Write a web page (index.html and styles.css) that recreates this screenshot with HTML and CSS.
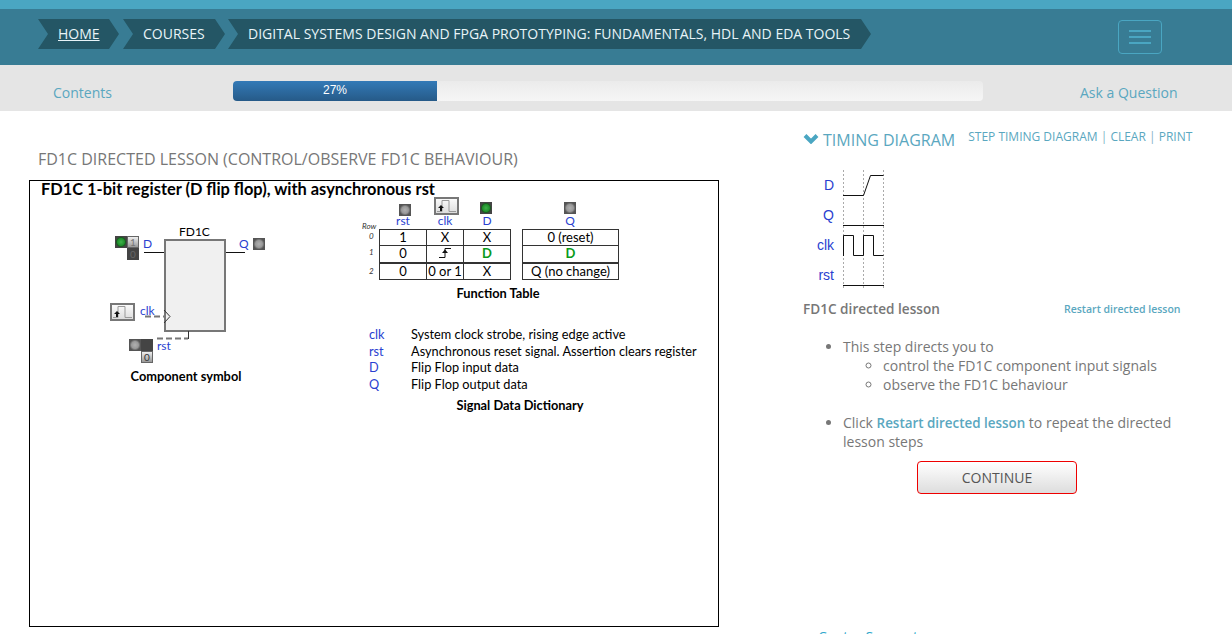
FILE: index.html
```html
<!DOCTYPE html>
<html lang="en">
<head>
    <meta charset="UTF-8">
    <meta name="viewport" content="width=device-width, initial-scale=1.0">
    <title>FD1C directed lesson</title>
    <link rel="stylesheet" href="styles.css">
</head>
<body>
    <header class="topbar">
        <nav class="crumbs">
            <a class="crumb crumb-home" href="#"><span>HOME</span></a>
            <a class="crumb crumb-courses" href="#">COURSES</a>
            <a class="crumb crumb-title" href="#">DIGITAL SYSTEMS DESIGN AND FPGA PROTOTYPING: FUNDAMENTALS, HDL AND EDA TOOLS</a>
        </nav>
        <button class="menu-btn"><i></i><i></i><i></i></button>
    </header>

    <div class="subbar">
        <a class="sub-link contents-link" href="#">Contents</a>
        <div class="progress"><div class="progress-fill">27%</div></div>
        <a class="sub-link ask-link" href="#">Ask a Question</a>
    </div>

    <main class="main">
        <section class="lesson">
            <h2 class="lesson-title">FD1C DIRECTED LESSON (CONTROL/OBSERVE FD1C BEHAVIOUR)</h2>
            <div class="canvas">
                <h3 class="canvas-title">FD1C 1-bit register (D flip flop), with asynchronous rst</h3>

                <!-- viewBox uses page coordinates so wires are easy to compare -->
                <svg class="wires" viewBox="30 181 688 445">
                    <rect x="165" y="240" width="60" height="91" fill="#f0f0f0" stroke="#777" stroke-width="2"/>
                    <path d="M144 252.500h20M226 252.500h19" stroke="#111" fill="none"/>
                    <path d="M145 316.500h19" stroke="#777" stroke-width="2" stroke-dasharray="6 3" fill="none"/>
                    <path d="M164 310l6 6.500-6 6.500" stroke="#333" fill="none"/>
                    <path d="M157 338.500h31" stroke="#777" stroke-width="2" stroke-dasharray="6 3" fill="none"/>
                    <path d="M188.500 331v8" stroke="#333" fill="none"/>
                </svg>

                <!-- component symbol -->
                <span class="lbl sym-name">FD1C</span>
                <span class="led led-on d-led"></span>
                <span class="bit bit-on d-one">1</span>
                <span class="bit bit-off d-zero">0</span>
                <span class="lbl sig d-lbl">D</span>
                <span class="lbl sig q-lbl">Q</span>
                <span class="led q-led"></span>
                <span class="clk-btn clk-sym">
                    <svg width="21" height="14" viewBox="0 0 21 14"><path d="M1 12.500h5v-11h7v11h7" fill="none" stroke="#999"/><path d="M2 9l3-3 3 3zM4 9h2v3h-2z" fill="#111"/></svg>
                </span>
                <span class="lbl sig clk-lbl">clk</span>
                <span class="led rst-led"></span>
                <span class="bit bit-off rst-one"></span>
                <span class="bit bit-on rst-zero">0</span>
                <span class="lbl sig rst-lbl">rst</span>
                <strong class="lbl caption cap-symbol">Component symbol</strong>

                <!-- function table -->
                <span class="led fn-rst-led"></span>
                <span class="clk-btn fn-clk-btn">
                    <svg width="21" height="14" viewBox="0 0 21 14"><path d="M1 12.500h5v-11h7v11h7" fill="none" stroke="#999"/><path d="M2 9l3-3 3 3zM4 9h2v3h-2z" fill="#111"/></svg>
                </span>
                <span class="led led-on fn-d-led"></span>
                <span class="led fn-q-led"></span>
                <span class="lbl sig head head-rst">rst</span>
                <span class="lbl sig head head-clk">clk</span>
                <span class="lbl sig head head-d">D</span>
                <span class="lbl sig head head-q">Q</span>
                <em class="row-no row-head">Row</em>
                <em class="row-no row-0">0</em>
                <em class="row-no row-1">1</em>
                <em class="row-no row-2">2</em>
                <div class="fn-grid fn-inputs">
                    <div>1</div><div>X</div><div>X</div>
                    <div>0</div>
                    <div><svg width="14" height="12" viewBox="0 0 14 12"><path d="M1 10.500h6v-9h6" fill="none" stroke="#111"/><path d="M4 6l3-3.500 3 3.500z" fill="#111"/></svg></div>
                    <div class="fn-d">D</div>
                    <div class="fn-last">0</div><div class="fn-last">0 or 1</div><div class="fn-last">X</div>
                </div>
                <div class="fn-grid fn-outputs">
                    <div>0 (reset)</div>
                    <div class="fn-d">D</div>
                    <div class="fn-last">Q (no change)</div>
                </div>
                <strong class="lbl caption cap-table">Function Table</strong>

                <!-- signal dictionary -->
                <dl class="dict">
                    <dt>clk</dt><dd>System clock strobe, rising edge active</dd>
                    <dt>rst</dt><dd>Asynchronous reset signal. Assertion clears register</dd>
                    <dt>D</dt><dd>Flip Flop input data</dd>
                    <dt>Q</dt><dd>Flip Flop output data</dd>
                </dl>
                <strong class="lbl caption cap-dict">Signal Data Dictionary</strong>
            </div>
        </section>

        <aside class="side">
            <div class="timing-head">
                <svg class="chevron" width="16" height="11" viewBox="0 0 16 11"><path d="M2 2.500l6 6 6-6" fill="none" stroke="#4aa6c2" stroke-width="4"/></svg>
                <h2 class="timing-title">TIMING DIAGRAM</h2>
                <div class="timing-links">
                    <a href="#">STEP TIMING DIAGRAM</a> <span>|</span> <a href="#">CLEAR</a> <span>|</span> <a href="#">PRINT</a>
                </div>
            </div>

            <div class="timing">
                <div class="timing-names">
                    <span>D</span><span>Q</span><span>clk</span><span>rst</span>
                </div>
                <svg class="waves" width="44" height="120" viewBox="842 168 44 120">
                    <path d="M843.500 169v119M863.500 169v119M883.500 169v119" stroke="#aaa" stroke-dasharray="2 2" fill="none"/>
                    <path d="M843 194.500h20.500l7-20h13" stroke="#111" fill="none"/>
                    <path d="M843 224.500h41" stroke="#111" fill="none"/>
                    <path d="M843.500 255v-20.500h10v20h10v-20h10v20h10" stroke="#111" fill="none"/>
                    <path d="M843 284.500h41" stroke="#111" fill="none"/>
                </svg>
            </div>

            <div class="directed-head">
                <h3>FD1C directed lesson</h3>
                <a href="#">Restart directed lesson</a>
            </div>

            <ul class="steps">
                <li>This step directs you to
                    <ul>
                        <li>control the FD1C component input signals</li>
                        <li>observe the FD1C behaviour</li>
                    </ul>
                </li>
                <li>Click <a href="#">Restart directed lesson</a> to repeat the directed lesson steps</li>
            </ul>

            <button class="continue">CONTINUE</button>

            <a class="center-link" href="#">Center Support</a>
        </aside>
    </main>
</body>
</html>
```

FILE: styles.css
```css
* {
    box-sizing: border-box;
}
html, body {
    height: 634px;
    overflow: hidden;
}
body {
    margin: 0;
    font-family: "Open Sans", sans-serif;
    font-size: 14px;
    color: #777;
    background-color: #fff;
}
a {
    color: #5aa7c0;
    text-decoration: none;
}

/* top bar */
.topbar {
    height: 65px;
    padding: 10px 70px 0 38px;
    display: flex;
    justify-content: space-between;
    background-color: #387c94;
    border-top: 9px solid #4aa6c2;
}
.crumbs {
    display: flex;
    height: 30px;
}
.crumb {
    height: 30px;
    line-height: 29px;
    color: #e8f4f8;
    background-color: #245665;
    clip-path: polygon(0 0, calc(100% - 10px) 0, 100% 50%, calc(100% - 10px) 100%, 0 100%, 10px 50%);
}
.crumb-home {
    width: 81px;
    padding-left: 20px;
    margin-right: 4px;
}
.crumb-home span {
    text-decoration: underline;
}
.crumb-courses {
    width: 102px;
    padding-left: 20px;
    margin-right: 3px;
}
.crumb-title {
    width: 643px;
    padding-left: 20px;
    white-space: nowrap;
}
.menu-btn {
    width: 44px;
    height: 34px;
    margin-top: 1px;
    padding: 9px 10px;
    display: flex;
    flex-direction: column;
    gap: 4px;
    align-items: center;
    background: transparent;
    border: 1px solid #4aa6c2;
    border-radius: 4px;
}
.menu-btn i {
    display: block;
    width: 22px;
    height: 2px;
    background-color: #4aa6c2;
}

/* progress row */
.subbar {
    height: 46px;
    display: flex;
    align-items: center;
    background-color: #e5e5e5;
}
.sub-link {
    position: relative;
    top: 5px;
    line-height: 16px;
}
.contents-link {
    margin-left: 53px;
    width: 180px;
}
.progress {
    width: 750px;
    height: 20px;
    margin-top: 5px;
    background: linear-gradient(#ebebeb, #f6f6f6);
    border-radius: 4px;
    overflow: hidden;
}
.progress-fill {
    width: 204px;
    height: 20px;
    font-family: "Liberation Sans", Arial, sans-serif;
    font-size: 12px;
    line-height: 19px;
    text-align: center;
    color: #fff;
    background: linear-gradient(#337ab7, #265a88);
}
.ask-link {
    margin-left: 97px;
}

/* main columns */
.main {
    display: flex;
    height: 523px;
}
.lesson {
    width: 774px;
    padding-left: 29px;
}
.lesson-title {
    margin: 39px 0 11px 9px;
    font-size: 16px;
    font-weight: 400;
    line-height: 19px;
    color: #777;
    white-space: nowrap;
}

/* diagram canvas */
.canvas {
    position: relative;
    width: 690px;
    height: 447px;
    border: 1px solid #000;
    font-family: Lato, sans-serif;
    font-size: 12px;
    color: #000;
}
.canvas-title {
    position: absolute;
    left: 11px;
    top: -1px;
    margin: 0;
    font-size: 16.400px;
    line-height: 18px;
    font-weight: 700;
    white-space: nowrap;
}
.wires {
    position: absolute;
    left: 0;
    top: 0;
    width: 688px;
    height: 445px;
}
.lbl {
    position: absolute;
    line-height: 14px;
    white-space: nowrap;
}
.sig {
    color: #2a3fd0;
}
.caption {
    font-size: 12.800px;
    font-weight: 700;
    transform: translateX(-50%);
}
.sym-name { left: 149px; top: 44px; }
.d-lbl { left: 113px; top: 56px; }
.q-lbl { left: 209px; top: 56px; }
.clk-lbl { left: 110px; top: 123px; }
.rst-lbl { left: 127px; top: 158px; }
.cap-symbol { left: 156px; top: 188px; }
.cap-table { left: 468px; top: 105px; }
.cap-dict { left: 490px; top: 217px; }

.led {
    position: absolute;
    width: 12px;
    height: 12px;
    background: #555 radial-gradient(circle, #b0b0b0 0, #999 3.500px, #777 4.500px, #555 5.500px);
}
.led-on {
    background: #444 radial-gradient(circle, #3fb24a 0, #1f8f2c 3.500px, #1a5a20 4.500px, #444 5.500px);
}
.d-led { left: 85px; top: 55px; }
.q-led { left: 223px; top: 57px; }
.rst-led { left: 99px; top: 158px; }
.fn-rst-led { left: 369px; top: 23px; }
.fn-d-led { left: 450px; top: 21px; }
.fn-q-led { left: 534px; top: 21px; }

.bit {
    position: absolute;
    width: 12px;
    height: 12px;
    font-size: 10px;
    line-height: 12px;
    text-align: center;
}
.bit-on {
    color: #777;
    background: linear-gradient(#eee, #999);
    border: 1px solid #666;
    line-height: 10px;
}
.bit-off {
    color: #666;
    background-color: #444;
}
.d-one { left: 97px; top: 55px; }
.d-zero { left: 97px; top: 67px; }
.rst-one { left: 111px; top: 158px; }
.rst-zero { left: 111px; top: 170px; color: #333; }

.clk-btn {
    position: absolute;
    width: 25px;
    height: 18px;
    display: flex;
    align-items: center;
    justify-content: center;
    background: linear-gradient(#fafafa, #ddd);
    border: 2px solid #777;
}
.clk-sym { left: 80px; top: 122px; }
.fn-clk-btn { left: 404px; top: 16px; }

.head { transform: translateX(-50%); top: 33px; }
.head-rst { left: 373px; }
.head-clk { left: 415px; }
.head-d { left: 457px; }
.head-q { left: 540px; }

.row-no {
    position: absolute;
    font-size: 8px;
    line-height: 10px;
    color: #333;
}
.row-head { left: 332px; top: 40px; }
.row-0 { left: 339px; top: 50px; }
.row-1 { left: 339px; top: 66px; }
.row-2 { left: 339px; top: 85px; }

.fn-grid {
    position: absolute;
    top: 48px;
    display: grid;
    grid-template-rows: 16px 17px 17px;
    font-size: 13px;
}
.fn-inputs {
    left: 349px;
    grid-template-columns: 47px 37px 47px;
}
.fn-outputs {
    left: 492px;
    grid-template-columns: 96px;
}
.fn-grid div {
    display: flex;
    align-items: center;
    justify-content: center;
    margin: 0 -1px -1px 0;
    padding-bottom: 2px;
    border: 1px solid #333;
    white-space: nowrap;
}
.fn-grid .fn-last {
    margin-top: 1px;
}
.fn-grid .fn-d {
    font-weight: 700;
    color: #0a9a1a;
}

.dict {
    position: absolute;
    left: 339px;
    top: 145px;
    margin: 0;
    display: grid;
    grid-template-columns: 42px auto;
    grid-auto-rows: 16.500px;
    font-size: 12.750px;
    line-height: 16px;
    white-space: nowrap;
}
.dict dt {
    color: #2a3fd0;
}
.dict dd {
    margin: 0;
}

/* right column */
.side {
    width: 429px;
    padding-left: 29px;
    position: relative;
}
.timing-head {
    height: 58px;
    padding-top: 17px;
    display: flex;
    align-items: flex-start;
}
.chevron {
    margin-top: 5px;
    margin-right: 4px;
}
.timing-title {
    margin: 0 13px 0 0;
    font-size: 16px;
    font-weight: 400;
    line-height: 24px;
    color: #5aa7c0;
    white-space: nowrap;
}
.timing-links {
    margin-top: 1px;
    font-size: 12px;
    line-height: 16px;
    white-space: nowrap;
}
.timing-links span {
    color: #7fb4c6;
}
.timing {
    display: flex;
    height: 120px;
    margin-bottom: 9px;
}
.timing-names {
    width: 31px;
    display: flex;
    flex-direction: column;
    align-items: flex-end;
    padding-top: 6px;
    font-family: "Liberation Sans", Arial, sans-serif;
    font-size: 14px;
    color: #2a3fd0;
}
.timing-names span {
    flex-shrink: 0;
    height: 30px;
    line-height: 20px;
}
.waves {
    margin-left: 8px;
}
.directed-head {
    display: flex;
    align-items: center;
    height: 20px;
}
.directed-head h3 {
    width: 261px;
    margin: 0;
    font-size: 13.600px;
    font-weight: 600;
    color: #777;
}
.directed-head a {
    margin-top: 2px;
    font-size: 10.500px;
    font-weight: 600;
}
.steps {
    margin: 19px 0 0;
    padding-left: 40px;
    width: 376px;
    line-height: 19px;
}
.steps > li + li {
    margin-top: 19px;
}
.steps ul {
    margin: 0;
    padding-left: 40px;
}
.steps a {
    font-size: 13.400px;
    line-height: 1;
    font-weight: 600;
}
.continue {
    display: block;
    width: 160px;
    height: 33px;
    margin: 10px 0 0 114px;
    font-family: "Open Sans", sans-serif;
    font-size: 14px;
    color: #555;
    background: linear-gradient(#fff, #ddd);
    border: 1px solid #e00;
    border-radius: 4px;
}
.center-link {
    position: absolute;
    left: 44px;
    top: 516px;
    line-height: 20px;
    color: #2fa8cc;
}
```
